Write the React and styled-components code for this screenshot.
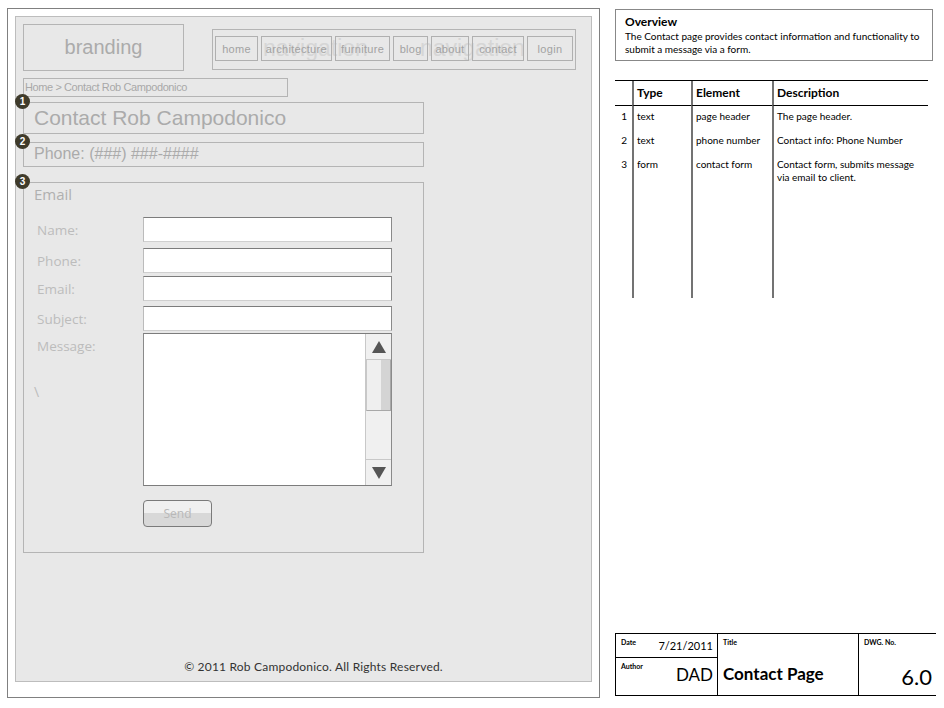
import { Fragment } from "react";
import styled, { createGlobalStyle } from "styled-components";

const GlobalStyle = createGlobalStyle`
  body {
    margin: 0;
    background: #fff;
    font-family: "Liberation Sans", Arial, sans-serif;
  }
`;

const NAV = [
  { name: "home", w: 44 },
  { name: "architecture", w: 72 },
  { name: "furniture", w: 57 },
  { name: "blog", w: 35 },
  { name: "about", w: 39 },
  { name: "contact", w: 53 },
  { name: "login", w: 47 },
];

const FIELDS = [
  { label: "Name:", gap: 0 },
  { label: "Phone:", gap: 6 },
  { label: "Email:", gap: 3 },
  { label: "Subject:", gap: 5 },
];

const ROWS = [
  { n: 1, type: "text", el: "page header", desc: "The page header." },
  { n: 2, type: "text", el: "phone number", desc: "Contact info: Phone Number" },
  { n: 3, type: "form", el: "contact form", desc: "Contact form, submits message via email to client." },
];

const Page = styled.div`
  display: flex;
  align-items: flex-start;
  gap: 15px;
  padding: 8px 0 0 7px;
`;

/* ---- wireframe ---- */

const Frame = styled.div`
  box-sizing: border-box;
  width: 593px;
  height: 690px;
  border: 1px solid #808080;
  padding: 7px 7px 15px 7px;
`;

const Panel = styled.div`
  box-sizing: border-box;
  height: 100%;
  background: #e8e8e8;
  border: 1px solid #bdbdbd;
  padding: 7px;
  display: flex;
  flex-direction: column;
`;

const Header = styled.div`
  display: flex;
  align-items: flex-start;
`;

const Branding = styled.div`
  box-sizing: border-box;
  width: 161px;
  height: 47px;
  border: 1px solid #b4b4b4;
  display: flex;
  align-items: center;
  justify-content: center;
  font-size: 20px;
  color: #ababab;
`;

const Nav = styled.div`
  position: relative;
  box-sizing: border-box;
  margin: 5px 0 0 28px;
  width: 364px;
  height: 41px;
  border: 1px solid #b4b4b4;
  padding: 6px 2px 0 2px;
  display: flex;
  gap: 3px;
`;

const NavWord = styled.span`
  position: absolute;
  top: 5px;
  left: ${(p) => p.x}px;
  font-size: 23px;
  color: #d6d6d6;
  pointer-events: none;
`;

const NavButton = styled.div`
  position: relative;
  box-sizing: border-box;
  width: ${(p) => p.w}px;
  height: 25px;
  border: 1px solid #b0b0b0;
  display: flex;
  align-items: center;
  justify-content: center;
  font-size: 11px;
  letter-spacing: 0.3px;
  color: #a2a2a2;
`;

const Crumb = styled.div`
  box-sizing: border-box;
  margin-top: 7px;
  width: 265px;
  height: 19px;
  border: 1px solid #b4b4b4;
  padding: 0 1px;
  font-size: 11px;
  letter-spacing: -0.4px;
  line-height: 16px;
  color: #a8a8a8;
`;

const Box = styled.div`
  position: relative;
  box-sizing: border-box;
  margin-top: ${(p) => p.mt}px;
  width: 401px;
  height: ${(p) => p.h}px;
  border: 1px solid #b4b4b4;
  padding-left: 10px;
`;

const Badge = styled.span`
  position: absolute;
  top: -9px;
  left: -9px;
  width: 15px;
  height: 15px;
  border-radius: 50%;
  background: #3f3b2b;
  color: #fff;
  font-size: 10px;
  font-weight: bold;
  line-height: 15px;
  text-align: center;
`;

const Title = styled.div`
  font-size: 21px;
  line-height: 29px;
  color: #ababab;
`;

const Phone = styled.div`
  font-size: 16px;
  line-height: 22px;
  color: #ababab;
`;

const Legend = styled.div`
  margin-top: 1px;
  font-family: "Open Sans", sans-serif;
  font-size: 15px;
  color: #b0b0b0;
`;

const Form = styled.div`
  margin-top: 13px;
  display: grid;
  grid-template-columns: 109px 249px;
`;

const Label = styled.div`
  display: flex;
  align-items: center;
  padding-left: 3px;
  margin-top: ${(p) => p.gap}px;
  font-family: "Open Sans", sans-serif;
  font-size: 13.5px;
  color: #bcbcbc;
`;

const Input = styled.div`
  box-sizing: border-box;
  margin-top: ${(p) => p.gap}px;
  height: 25px;
  background: #fff;
  border: 1px solid;
  border-color: #7c7c7c #8a8a8a #cfcfcf #bbb;
`;

const MessageLabel = styled(Label)`
  flex-direction: column;
  align-items: flex-start;
  padding-top: 3px;
`;

const Stray = styled.span`
  margin-top: 27px;
  margin-left: -3px;
  font-size: 14px;
  color: #bcbcbc;
`;

const TextArea = styled.div`
  box-sizing: border-box;
  margin-top: 2px;
  height: 153px;
  background: #fff;
  border: 1px solid;
  border-color: #7c7c7c #8a8a8a #7c7c7c #8a8a8a;
  display: flex;
  justify-content: flex-end;
`;

const Scroll = styled.div`
  width: 25px;
  background: #f0f0f0;
  border-left: 1px solid #c8c8c8;
  display: flex;
  flex-direction: column;
`;

const Arrow = styled.div`
  height: 25px;
  display: flex;
  align-items: center;
  justify-content: center;
  border-${(p) => (p.up ? "bottom" : "top")}: 1px solid #c8c8c8;
  margin-top: ${(p) => (p.up ? 0 : "auto")};
`;

const Thumb = styled.div`
  box-sizing: border-box;
  height: 51px;
  border: 1px solid #a8a8a8;
  border-top: none;
  border-left-color: #c8c8c8;
  background: linear-gradient(to right, #efefef 60%, #d4d4d4 60%);
`;

const SendRow = styled.div`
  grid-column: 2;
  margin-top: 14px;
`;

const SendButton = styled.div`
  box-sizing: border-box;
  width: 69px;
  height: 27px;
  border: 1px solid #7a7a7a;
  border-radius: 4px;
  background: linear-gradient(#f0f0f0 50%, #d8d8d8 50%);
  display: flex;
  align-items: center;
  justify-content: center;
  font-family: "Open Sans", sans-serif;
  font-size: 12px;
  color: #b8b8b8;
`;

const Footer = styled.div`
  margin-top: auto;
  padding-left: 20px;
  text-align: center;
  font-family: Lato, sans-serif;
  font-size: 12px;
  letter-spacing: 0.2px;
  color: #333;
`;

/* ---- notes column ---- */

const Notes = styled.div`
  width: 321px;
  height: 689px;
  display: flex;
  flex-direction: column;
  font-family: Lato, sans-serif;
  color: #000;
`;

const Overview = styled.div`
  box-sizing: border-box;
  margin-top: 1px;
  width: 318px;
  height: 52px;
  border: 1px solid #888;
  padding: 4px 9px;
  font-size: 10px;
  line-height: 13px;

  h4 {
    margin: 0 0 1px;
    font-size: 12px;
    line-height: 15px;
  }
`;

const Table = styled.div`
  margin-top: 19px;
  width: 313px;
  height: 217px;
  border-top: 1px solid #000;
  display: grid;
  grid-template-columns: 17px 59px 81px 156px;
  grid-template-rows: 25px 24px 24px auto 1fr;
  font-size: 10px;
  line-height: 13px;
`;

const Cell = styled.div`
  padding: ${(p) => (p.head ? "5px 3px 0" : "4px 3px 0")};
  border-left: ${(p) => (p.first ? "none" : "2px solid #737373")};
  border-bottom: ${(p) => (p.head ? "1px solid #000" : "none")};
  font-size: ${(p) => (p.head ? 12 : 10)}px;
  font-weight: ${(p) => (p.head ? "bold" : "normal")};
  text-align: ${(p) => (p.first ? "right" : "left")};
  padding-right: ${(p) => (p.first ? 5 : 3)}px;
`;

const TitleBlock = styled.div`
  box-sizing: border-box;
  margin-top: auto;
  margin-bottom: 1px;
  height: 63px;
  border-top: 1px solid #000;
  border-bottom: 1px solid #000;
  border-left: 1px solid #000;
  display: grid;
  grid-template-columns: 101px 141px 1fr;
`;

const BlockCol = styled.div`
  display: flex;
  flex-direction: column;
  border-left: ${(p) => (p.first ? "none" : "1px solid #000")};
`;

const BlockCell = styled.div`
  box-sizing: border-box;
  height: ${(p) => (p.h ? `${p.h}px` : "auto")};
  flex: ${(p) => (p.h ? "none" : 1)};
  display: flex;
  justify-content: ${(p) => p.justify || "space-between"};
  padding: 4px 4px 0 5px;
  border-bottom: ${(p) => (p.line ? "1px solid #000" : "none")};
`;

const Tag = styled.span`
  font-size: 7px;
  font-weight: bold;
`;

const Value = styled.span`
  font-size: ${(p) => p.size}px;
  font-weight: ${(p) => (p.bold ? "bold" : "normal")};
  margin-top: ${(p) => p.mt || 0}px;
`;

export default function App() {
  return (
    <>
      <GlobalStyle />
      <Page>
        <Frame>
          <Panel>
            <Header>
              <Branding>branding</Branding>
              <Nav>
                <NavWord x={50}>navigation</NavWord>
                <NavWord x={207}>navigation</NavWord>
                {NAV.map((n) => (
                  <NavButton key={n.name} w={n.w}>
                    {n.name}
                  </NavButton>
                ))}
              </Nav>
            </Header>

            <Crumb>Home &gt; Contact Rob Campodonico</Crumb>

            <Box mt={5} h={32}>
              <Badge>1</Badge>
              <Title>Contact Rob Campodonico</Title>
            </Box>

            <Box mt={8} h={25}>
              <Badge>2</Badge>
              <Phone>Phone: (###) ###-####</Phone>
            </Box>

            <Box mt={15} h={371}>
              <Badge>3</Badge>
              <Legend>Email</Legend>
              <Form>
                {FIELDS.map((f) => (
                  <Fragment key={f.label}>
                    <Label gap={f.gap}>{f.label}</Label>
                    <Input gap={f.gap} />
                  </Fragment>
                ))}
                <MessageLabel gap={3}>
                  Message:
                  <Stray>\</Stray>
                </MessageLabel>
                <TextArea>
                  <Scroll>
                    <Arrow up>
                      <svg width="14" height="12" viewBox="0 0 14 12">
                        <path d="M7 0 L14 12 L0 12 Z" fill="#555" />
                      </svg>
                    </Arrow>
                    <Thumb />
                    <Arrow>
                      <svg width="14" height="12" viewBox="0 0 14 12">
                        <path d="M0 0 L14 0 L7 12 Z" fill="#555" />
                      </svg>
                    </Arrow>
                  </Scroll>
                </TextArea>
                <SendRow>
                  <SendButton>Send</SendButton>
                </SendRow>
              </Form>
            </Box>

            <Footer>© 2011 Rob Campodonico. All Rights Reserved.</Footer>
          </Panel>
        </Frame>

        <Notes>
          <Overview>
            <h4>Overview</h4>
            The Contact page provides contact information and functionality to
            submit a message via a form.
          </Overview>

          <Table>
            <Cell head first />
            <Cell head>Type</Cell>
            <Cell head>Element</Cell>
            <Cell head>Description</Cell>
            {ROWS.map((r) => (
              <Fragment key={r.n}>
                <Cell first>{r.n}</Cell>
                <Cell>{r.type}</Cell>
                <Cell>{r.el}</Cell>
                <Cell>{r.desc}</Cell>
              </Fragment>
            ))}
            <Cell first />
            <Cell />
            <Cell />
            <Cell />
          </Table>

          <TitleBlock>
            <BlockCol first>
              <BlockCell line h={24}>
                <Tag>Date</Tag>
                <Value size={11} mt={1}>7/21/2011</Value>
              </BlockCell>
              <BlockCell>
                <Tag>Author</Tag>
                <Value size={17} mt={2}>DAD</Value>
              </BlockCell>
            </BlockCol>
            <BlockCol>
              <BlockCell h={26}>
                <Tag>Title</Tag>
              </BlockCell>
              <BlockCell justify="flex-start">
                <Value size={17} bold mt={-1}>Contact Page</Value>
              </BlockCell>
            </BlockCol>
            <BlockCol>
              <BlockCell h={26}>
                <Tag>DWG. No.</Tag>
              </BlockCell>
              <BlockCell justify="flex-end">
                <Value size={22} mt={-1}>6.0</Value>
              </BlockCell>
            </BlockCol>
          </TitleBlock>
        </Notes>
      </Page>
    </>
  );
}
